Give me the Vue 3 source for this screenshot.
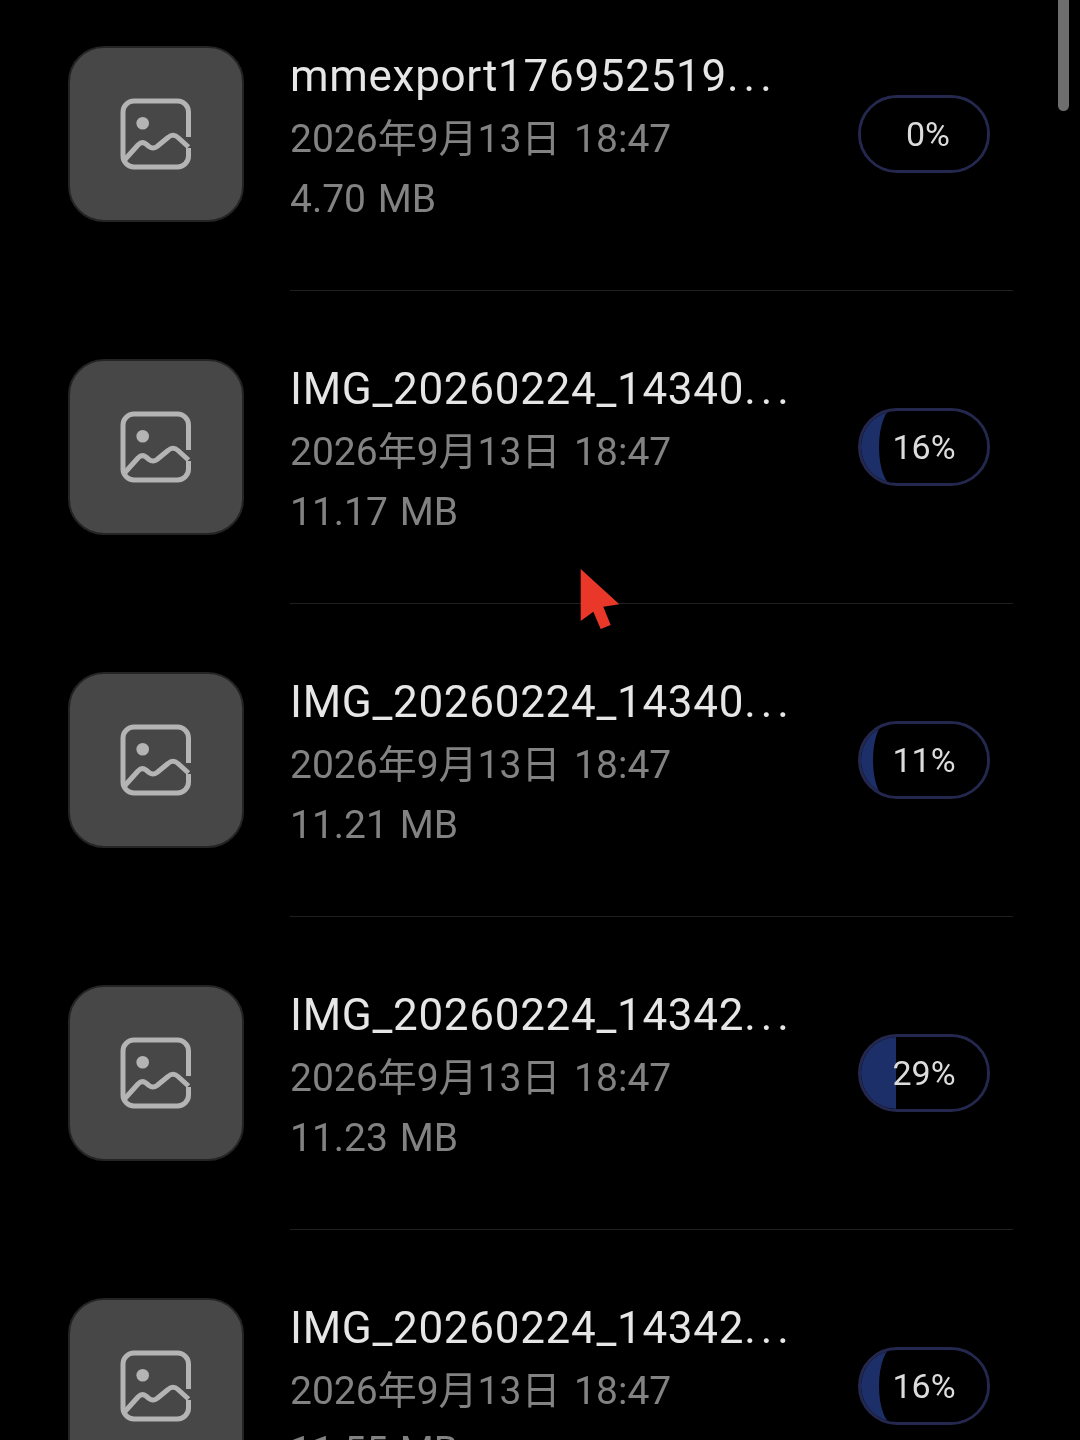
<template>
  <div class="page">
    <div class="scrollbar"></div>
    <div v-for="(item, i) in items" :key="i" class="row">
      <div class="thumb">
        <svg width="72" height="72" viewBox="0 0 72 72" fill="none" stroke="#b4b4b4" stroke-width="5">
          <path d="M68.5 39 V14 a11 11 0 0 0 -11 -11 H14 a11 11 0 0 0 -11 11 V58 a11 11 0 0 0 11 11 H57.5 a11 11 0 0 0 11 -11 V50" />
          <circle cx="22.7" cy="25.2" r="6.3" fill="#b4b4b4" stroke="none" />
          <path d="M4.5 62 L18 47 Q22 43 26 46 L29 48.5 Q33 51.5 37 48.5 L48 39.5 Q53 35 58 39.5 L68.5 49" stroke-linejoin="round" />
        </svg>
      </div>
      <div class="info">
        <div class="name">{{ item.name }}<span class="dots">...</span></div>
        <div class="meta date">2026年9月13日 18:47</div>
        <div class="meta">{{ item.size }}</div>
      </div>
      <div class="pill">
        <div v-if="item.pct > 0" class="fill" :style="{ width: edge(item.pct) + 20 + 'px' }"></div>
        <div class="cover" :style="coverStyle(item.pct)"></div>
        <span class="pct" :class="{ empty: item.pct === 0 }">{{ item.pct }}%</span>
      </div>
    </div>
    <svg class="cursor" width="42" height="64" viewBox="0 0 42 64">
      <path d="M1.7 1 L40.3 36.3 L24.3 38.7 L31.7 57 L21.7 61 L14.3 43.7 L1.7 53 Z" fill="#e9382a" />
    </svg>
  </div>
</template>

<script setup>
const items = [
  { name: 'mmexport176952519', size: '4.70 MB', pct: 0 },
  { name: 'IMG_20260224_14340', size: '11.17 MB', pct: 16 },
  { name: 'IMG_20260224_14340', size: '11.21 MB', pct: 11 },
  { name: 'IMG_20260224_14342', size: '11.23 MB', pct: 29 },
  { name: 'IMG_20260224_14342', size: '11.55 MB', pct: 16 }
]

const edge = (pct) => (pct > 0 ? Math.round(pct * 1.32) - 3 : 0)

// small values stay inside the pill's round end, so the fill ends in a curve
const coverStyle = (pct) => {
  const bend = pct > 0 && pct < 20 ? 15 : 0
  return {
    left: edge(pct) + 'px',
    borderTopLeftRadius: bend + 'px 39px',
    borderBottomLeftRadius: bend + 'px 39px'
  }
}
</script>

<style scoped>
.page {
  position: relative;
  width: 1080px;
  height: 1440px;
  overflow: hidden;
  background: #000;
  padding-top: 46px;
  box-sizing: border-box;
  font-family: Roboto, "Noto Sans CJK SC", sans-serif;
  filter: blur(0.5px);
}

.scrollbar {
  position: absolute;
  top: -10px;
  right: 11px;
  width: 11px;
  height: 121px;
  border-radius: 6px;
  background: #6e6e6e;
}

.row {
  display: flex;
  align-items: center;
  height: 176px;
  padding: 0 90px 0 68px;
  margin-bottom: 137px;
  position: relative;
}

.row::after {
  content: "";
  position: absolute;
  left: 290px;
  right: 67px;
  bottom: -69px;
  height: 1px;
  background: #1f1f1f;
}

.thumb {
  width: 172px;
  height: 172px;
  flex: none;
  display: flex;
  align-items: center;
  justify-content: center;
  background: #474747;
  border: 2px solid #242424;
  border-radius: 36px;
}

.info {
  flex: 1;
  margin-left: 46px;
  min-width: 0;
  padding-top: 7px;
}

.name {
  font-size: 44px;
  line-height: 60px;
  margin-bottom: 3px;
  letter-spacing: 0.7px;
  color: #e6e6e6;
  white-space: nowrap;
}

.dots {
  letter-spacing: 5px;
}

.meta {
  font-size: 39px;
  line-height: 60px;
  color: #828282;
  white-space: nowrap;
  word-spacing: 2px;
}

.date {
  word-spacing: 4px;
}

.pill {
  position: relative;
  flex: none;
  width: 132px;
  height: 78px;
  box-sizing: border-box;
  border: 3px solid #25284e;
  border-radius: 39px;
  overflow: hidden;
  display: flex;
  align-items: center;
  justify-content: center;
}

.fill {
  position: absolute;
  left: 0;
  top: 0;
  bottom: 0;
  background: #1c2f69;
}

.cover {
  position: absolute;
  top: -3px;
  bottom: -3px;
  right: 0;
  background: #000;
}

.pct {
  position: relative;
  font-size: 34px;
  color: #dcdcdc;
}

.pct.empty {
  margin-left: 8px;
}

.cursor {
  position: absolute;
  left: 579px;
  top: 568px;
}
</style>

<style>
body {
  background: #000;
}
</style>
